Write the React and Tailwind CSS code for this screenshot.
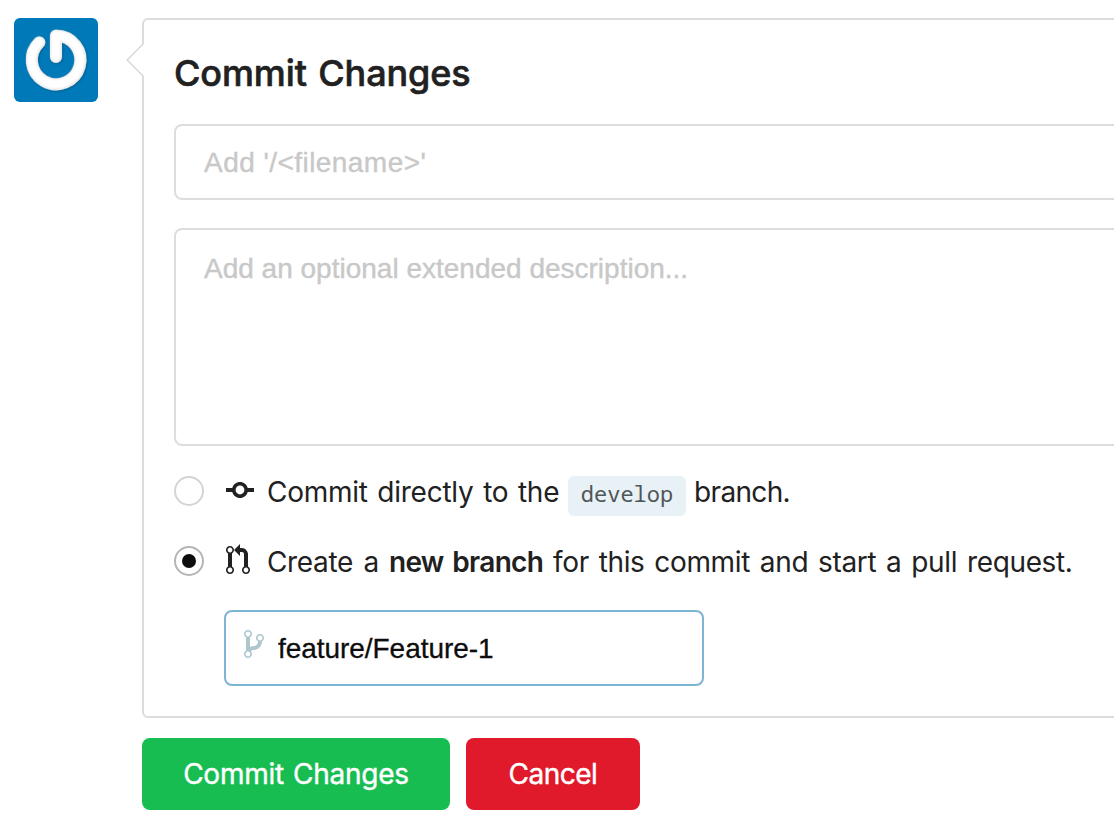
import React from "react";

const COMMIT =
  "M10.86 7c-.45-1.72-2-3-3.86-3-1.86 0-3.41 1.28-3.86 3H0v2h3.14c.45 1.72 2 3 3.86 3 1.86 0 3.41-1.28 3.86-3H14V7h-3.14zM7 10.2c-1.22 0-2.2-.98-2.2-2.2 0-1.22.98-2.2 2.2-2.2 1.22 0 2.2.98 2.2 2.2 0 1.22-.98 2.2-2.2 2.2z";
const PULL_REQUEST =
  "M11 11.28V5c-.03-.78-.34-1.47-.94-2.06C9.46 2.35 8.78 2.03 8 2H7V0L4 3l3 3V4h1c.27.02.48.11.69.31.21.2.3.42.31.69v6.28A1.993 1.993 0 0 0 10 15a1.993 1.993 0 0 0 1-3.72zm-1 2.92c-.66 0-1.2-.55-1.2-1.2 0-.65.55-1.2 1.2-1.2.65 0 1.2.55 1.2 1.2 0 .65-.55 1.2-1.2 1.2zM4 3c0-1.11-.89-2-2-2a1.993 1.993 0 0 0-1 3.72v6.56A1.993 1.993 0 0 0 2 15a1.993 1.993 0 0 0 1-3.72V4.72c.59-.34 1-.98 1-1.72zm-.8 10c0 .66-.55 1.2-1.2 1.2-.65 0-1.2-.55-1.2-1.2 0-.65.55-1.2 1.2-1.2.65 0 1.2.55 1.2 1.2zM2 4.2C1.34 4.2.8 3.65.8 3c0-.65.55-1.2 1.2-1.2.65 0 1.2.55 1.2 1.2 0 .65-.55 1.2-1.2 1.2z";
const BRANCH =
  "M10 5c0-1.11-.89-2-2-2a1.993 1.993 0 0 0-1 3.72v.3c-.02.52-.23.98-.63 1.38-.4.4-.86.61-1.38.63-.83.02-1.48.16-2 .45V4.72a1.993 1.993 0 0 0-1-3.72C.88 1 0 1.89 0 3a2 2 0 0 0 1 1.72v6.56c-.59.35-1 .99-1 1.72 0 1.11.89 2 2 2 1.11 0 2-.89 2-2 0-.53-.2-1-.53-1.36.09-.06.48-.41.59-.47.25-.11.56-.17.94-.17 1.05-.05 1.95-.45 2.75-1.25S8.95 7.77 9 6.73h-.02C9.59 6.37 10 5.73 10 5zM2 1.8c.66 0 1.2.55 1.2 1.2 0 .65-.55 1.2-1.2 1.2C1.35 4.2.8 3.65.8 3c0-.65.55-1.2 1.2-1.2zm0 12.41c-.66 0-1.2-.55-1.2-1.2 0-.65.55-1.2 1.2-1.2.65 0 1.2.55 1.2 1.2 0 .65-.55 1.2-1.2 1.2zm6-8c-.66 0-1.2-.55-1.2-1.2 0-.65.55-1.2 1.2-1.2.65 0 1.2.55 1.2 1.2 0 .65-.55 1.2-1.2 1.2z";

function Octicon({ path, units, className }) {
  return (
    <svg viewBox={`0 0 ${units} 16`} className={className} fill="currentColor" aria-hidden="true">
      <path d={path} />
    </svg>
  );
}

function Avatar() {
  return (
    <svg viewBox="0 0 84 84" className="h-[84px] w-[84px] shrink-0 rounded-[6px] bg-[#0079b9]" aria-hidden="true">
      <defs>
        <filter id="logo-bevel" x="-20%" y="-20%" width="140%" height="140%">
          <feDropShadow dx="0.6" dy="0.8" stdDeviation="1" floodColor="#00395c" floodOpacity="0.5" />
        </filter>
        <filter id="logo-soft" x="-20%" y="-20%" width="140%" height="140%">
          <feGaussianBlur stdDeviation="0.9" />
        </filter>
      </defs>
      <g fill="none" strokeLinecap="round" strokeLinejoin="round">
        <path d="M25.4 24.4A24.3 24.3 0 1 0 42 17.7V39" stroke="#e4e5e7" strokeWidth="12" filter="url(#logo-bevel)" />
        <path d="M25.1 24.1A24.3 24.3 0 1 0 41.7 17.4V38.6" stroke="#ffffff" strokeWidth="9.6" filter="url(#logo-soft)" />
      </g>
    </svg>
  );
}

function Radio({ checked }) {
  return (
    <span
      role="radio"
      aria-checked={checked}
      className={`flex h-[30px] w-[30px] shrink-0 items-center justify-center rounded-full border-2 bg-white ${
        checked ? "border-[#b5b5b5]" : "border-[#d4d4d5]"
      }`}
    >
      {checked && <span className="h-[14px] w-[14px] rounded-full bg-[#0d0d0d]" />}
    </span>
  );
}

export default function App() {
  return (
    <div className="flex h-[840px] w-full gap-[44px] overflow-hidden bg-white pl-[14px] pt-[18px] font-['Inter',sans-serif] text-[28px] text-[#212121]">
      <Avatar />
      <div className="min-w-0 flex-1">
        <section className="relative -mr-10 h-[700px] rounded-[6px] border-2 border-[#dcdcdc] px-[30px]">
          <svg viewBox="0 0 20 36" className="absolute -left-[18px] top-[22px] h-[36px] w-[20px]" aria-hidden="true">
            <path d="M18 1L2 18L18 35V36H20V0H18Z" fill="#fff" />
            <path d="M17.5 1.5L1.2 18L17.5 34.5" fill="none" stroke="#d8d8d8" strokeWidth="1.5" />
          </svg>
          <h3 className="h-[104px] pt-[29px] text-[36px] leading-[48px] font-[550] tracking-[-0.1px] [word-spacing:2px] [-webkit-text-stroke:0.6px_#212121]">
            Commit Changes
          </h3>
          <input
            className="block h-[76px] w-full rounded-[8px] border-2 border-[#dddddd] px-[28px] pt-[2px] font-['Liberation_Sans',sans-serif] text-[28px] tracking-[0.45px] outline-none [-webkit-text-stroke:0.4px_#c8c8c8] placeholder:text-[#c8c8c8] placeholder:opacity-100"
            placeholder="Add '/<filename>'"
          />
          <textarea
            className="mt-[28px] block h-[218px] w-full resize-none rounded-[8px] border-2 border-[#dddddd] px-[28px] py-[21px] font-['Liberation_Sans',sans-serif] text-[28px] leading-[36px] outline-none [-webkit-text-stroke:0.4px_#c8c8c8] placeholder:text-[#c8c8c8] placeholder:opacity-100"
            placeholder="Add an optional extended description..."
          />
          <div className="mt-[30px] flex h-[40px] items-start whitespace-nowrap">
            <Radio checked={false} />
            <Octicon path={COMMIT} units={14} className="-mt-[2px] ml-[22px] h-[32px] w-[28px] shrink-0" />
            <span className="ml-[13px] w-[301px] leading-[32px] tracking-[-0.25px] [word-spacing:2px]">Commit directly to the</span>
            <code className="flex h-[40px] w-[118px] shrink-0 items-center justify-center rounded-[6px] bg-[#e8f1f6] pb-[6px] font-['Noto_Sans_Mono','DejaVu_Sans_Mono',monospace] text-[22px] text-[#4f5658]">
              develop
            </code>
            <span className="ml-[8px] leading-[32px] tracking-[-0.65px]">branch.</span>
          </div>
          <div className="mt-[30px] flex h-[34px] items-start whitespace-nowrap">
            <Radio checked />
            <Octicon path={PULL_REQUEST} units={12} className="-mt-[2px] ml-[22px] h-[32px] w-[24px] shrink-0" />
            <span className="ml-[17px] flex leading-[32px] tracking-[-0.35px] [word-spacing:2.3px]">
              <span className="w-[122px] [word-spacing:3px]">Create a</span>
              <strong className="w-[164px] font-semibold tracking-[-0.7px]">new branch</strong>
              <span>for this commit and start a pull request.</span>
            </span>
          </div>
          <div className="mt-[30px] ml-[50px] flex h-[76px] w-[480px] items-center rounded-[8px] border-2 border-[#7db5d5] pl-[18px]">
            <Octicon path={BRANCH} units={10} className="mb-[8px] h-[32px] w-[20px] shrink-0 text-[#b0c6cf]" />
            <input
              className="ml-[14px] w-[380px] bg-transparent pt-[2px] font-['Liberation_Sans',sans-serif] text-[28px] tracking-[-0.05px] text-[#0d0d0d] outline-none [-webkit-text-stroke:0.3px_#0d0d0d]"
              defaultValue="feature/Feature-1"
            />
          </div>
        </section>
        <div className="mt-[20px] flex gap-[16px] text-white [-webkit-text-stroke:0.4px_#ffffff]">
          <button className="h-[72px] w-[308px] rounded-[8px] bg-[#18bd52] tracking-[-0.25px] [word-spacing:1.5px]">Commit Changes</button>
          <button className="h-[72px] w-[174px] rounded-[8px] bg-[#e01a2b] tracking-[-0.5px]">Cancel</button>
        </div>
      </div>
    </div>
  );
}
